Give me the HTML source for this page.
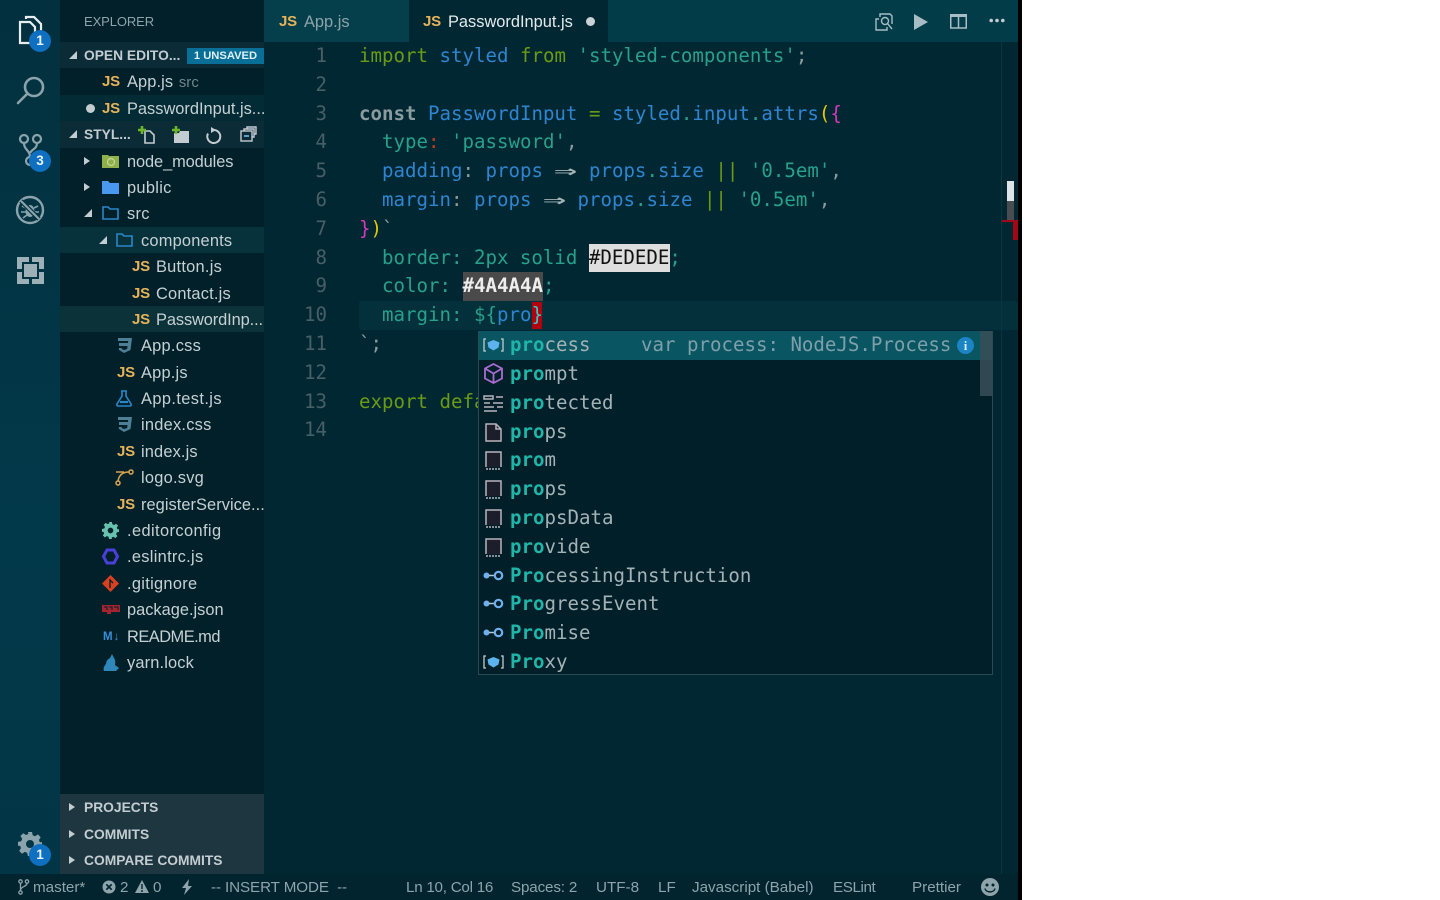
<!DOCTYPE html>
<html><head><meta charset="utf-8"><title>PasswordInput.js</title>
<style>
html,body{margin:0;padding:0;width:1440px;height:900px;overflow:hidden;background:#fff}
*{box-sizing:border-box}
.a{position:absolute}
#app{position:absolute;left:0;top:0;width:1018px;height:900px;background:#012631;overflow:hidden;font-family:"Liberation Sans",sans-serif}
#bar{position:absolute;left:1018px;top:0;width:4px;height:900px;background:#000}
#act{left:0;top:0;width:60px;height:874px;background:linear-gradient(#03303e,#02394a 60%,#023646)}
#side{left:60px;top:0;width:204px;height:874px;background:#01202a}
#tabs{left:264px;top:0;width:754px;height:42px;background:#033c49}
#ed{left:264px;top:42px;width:754px;height:832px;background:#012832}
#st{left:0;top:874px;width:1018px;height:26px;background:#01242e;color:#8fa3ab;font-size:15.2px;line-height:26px}
.st{position:absolute;top:1px;white-space:nowrap}
.hd{position:absolute;left:60px;width:204px;height:26.4px;background:#0b2b36}
.h{position:absolute;left:84px;font-size:13.8px;font-weight:bold;color:#c3cdd1;white-space:nowrap;line-height:26px;transform:translateY(1px)}
.r{position:absolute;font-size:16.4px;color:#c6d0d3;white-space:nowrap;line-height:26px;height:26px;transform:translateY(1px)}
.js{position:absolute;font-size:15px;font-weight:bold;color:#e6b35a;line-height:26px;height:26px;letter-spacing:-.2px;transform:translateY(1px)}
.tri{position:absolute;width:0;height:0}
.open{border-left:8px solid transparent;border-bottom:8px solid #c3cdd1}
.cl{border-left:6px solid #c3cdd1;border-top:4.5px solid transparent;border-bottom:4.5px solid transparent}
.badge{position:absolute;width:22px;height:22px;border-radius:50%;background:#0f6fc0;color:#e8f2fa;font-size:13.5px;font-weight:bold;text-align:center;line-height:22px}
.c{position:absolute;font-family:"DejaVu Sans Mono","Liberation Mono",monospace;font-size:19.1px;line-height:29px;height:29px;white-space:pre;color:#27a08c}
.n{position:absolute;left:290px;width:37px;text-align:right;font-family:"DejaVu Sans Mono",monospace;font-size:19.1px;line-height:29px;color:#475f66}
.g{color:#6b9a16}.b{color:#2f84cf}.t{color:#27a08c}.w{color:#8a9ca0}.y{color:#e0c80c}.m{color:#d33ab8}.o{color:#6b9a16}
.ar{display:inline-block;width:11.5px;margin-right:11.5px;transform:scaleX(2);transform-origin:left center;color:#a4b2b6;font-weight:bold}
.s{position:absolute;left:510px;font-family:"DejaVu Sans Mono",monospace;font-size:19.1px;line-height:29px;height:29px;white-space:pre;color:#a4b2b6;transform:translateY(-1px)}
.s b{color:#1fb5a8}
svg{position:absolute;overflow:visible}
</style></head><body>
<div id="app">
<div class="a" id="act"></div>
<div class="a" id="side"></div>
<div class="a" id="tabs"></div>
<div class="a" id="ed"></div>

<!-- activity icons -->
<svg style="left:18px;top:14px" width="26" height="32" viewBox="0 0 26 32" fill="none" stroke="#e8eef0" stroke-width="2.2"><path d="M3 8h9l5 5v16H2V8z"/><path d="M8 5V3h8l7 7v14"/></svg>
<div class="badge" style="left:29px;top:30px">1</div>
<svg style="left:16px;top:75px" width="30" height="30" viewBox="0 0 30 30" fill="none" stroke="#8ba3ac" stroke-width="2.6"><circle cx="18" cy="12" r="9"/><path d="M11.5 18.5L2 28" stroke-linecap="round"/></svg>
<svg style="left:18px;top:134px" width="26" height="32" viewBox="0 0 26 32" fill="none" stroke="#8ba3ac" stroke-width="2.2"><circle cx="6" cy="5" r="4"/><circle cx="19" cy="5" r="4"/><circle cx="12" cy="27" r="4"/><path d="M6 9c0 7 6 7 6 14M19 9c0 6-5 6-7 10"/></svg>
<div class="badge" style="left:29px;top:150px">3</div>
<svg style="left:15px;top:195px" width="30" height="30" viewBox="0 0 30 30" fill="none" stroke="#8ba3ac" stroke-width="2.4"><circle cx="15" cy="15" r="13"/><ellipse cx="15" cy="16" rx="4.500" ry="6" fill="#8ba3ac" stroke="none"/><path d="M7 11l4 2M23 11l-4 2M6 17h5M24 17h-5M8 23l4-3M22 23l-4-3" stroke-width="1.600"/><path d="M6 6l18 18" stroke="#02323f" stroke-width="4.500"/><path d="M6 6l18 18" stroke-width="2.200"/></svg>
<svg style="left:17px;top:257px" width="27" height="27" viewBox="0 0 27 27"><path d="M0 0h12v5H5v7H0zM15 0h12v12h-5V5h-7zM0 15h5v7h7v5H0zM27 15v12H15v-5h7v-7z" fill="#9db0b7"/><rect x="7" y="7" width="13" height="13" fill="#9db0b7"/></svg>
<svg style="left:18px;top:832px" width="24" height="24" viewBox="0 0 24 24"><path fill="#8ba3ac" fill-rule="evenodd" d="M10 0h4l.7 3.2 2.4 1 2.8-1.8 2.8 2.8-1.8 2.8 1 2.4L24 10v4l-3.1.7-1 2.4 1.8 2.8-2.8 2.8-2.8-1.8-2.4 1L13.9 24h-4l-.7-3.1-2.4-1-2.8 1.8-2.8-2.8 1.8-2.8-1-2.4L0 13.9v-4l3.2-.7 1-2.4L2.4 4 5.2 1.2 8 3l2.4-1zM12 8a4 4 0 100 8 4 4 0 000-8z"/></svg>
<div class="badge" style="left:29px;top:844px">1</div>

<!-- sidebar -->
<div class="a" style="left:84px;top:9px;font-size:13px;color:#8fa3aa;line-height:26px;letter-spacing:-.1px">EXPLORER</div>

<div class="hd" style="top:42px"></div>
<div class="tri open" style="left:69px;top:51px"></div>
<div class="h" style="top:42px">OPEN EDITO...</div>
<div class="a" style="left:187px;top:48px;width:77px;height:16px;background:#0a6f96;color:#dff0f6;font-size:11.2px;font-weight:bold;line-height:16px;text-align:center;white-space:nowrap">1 UNSAVED</div>

<div class="js" style="left:102px;top:68px">JS</div>
<div class="r" style="left:127px;top:68px;letter-spacing:.1px">App.js <span style="color:#6f868d;font-size:14.8px;margin-left:1px">src</span></div>
<div class="a" style="left:60px;top:95px;width:204px;height:26px;background:#022b35"></div>
<div class="a" style="left:86px;top:104px;width:9px;height:9px;border-radius:50%;background:#c3cdd1"></div>
<div class="js" style="left:102px;top:95px">JS</div>
<div class="r" style="left:127px;top:95px">PasswordInput.js...</div>

<div class="hd" style="top:121px;height:27px"></div>
<div class="tri open" style="left:69px;top:130px"></div>
<div class="h" style="top:121px">STYL...</div>
<svg style="left:138px;top:126px" width="20" height="18" viewBox="0 0 20 18" fill="none"><path d="M7 5h5l4 4v8H7z" stroke="#c3cdd1" stroke-width="1.600"/><path d="M4 0v8M0 4h8" stroke="#6fb52c" stroke-width="2.600"/></svg>
<svg style="left:171px;top:126px" width="20" height="18" viewBox="0 0 20 18"><path d="M3 7h5l1-2h9v12H3z" fill="#c3cdd1"/><path d="M5 0v8M1 4h8" stroke="#6fb52c" stroke-width="2.600"/></svg>
<svg style="left:205px;top:127px" width="16" height="17" viewBox="0 0 16 17" fill="none"><path d="M9 3a6.500 6.500 0 11-6 3.500" stroke="#c3cdd1" stroke-width="2"/><path d="M6 0l5 3-5 3z" fill="#c3cdd1"/></svg>
<svg style="left:240px;top:126px" width="17" height="16" viewBox="0 0 17 16" fill="none" stroke="#c3cdd1" stroke-width="1.400"><rect x="1" y="5" width="11" height="10" fill="#0b2b36"/><path d="M4 5V3h10v8h-2M7 3V1h9v7h-2"/><path d="M4 10h5" stroke-width="2" stroke="#5fa0c8"/></svg>

<div class="tri cl" style="left:84px;top:157px"></div>
<svg style="left:102px;top:153px" width="17" height="15" viewBox="0 0 17 15"><path d="M0 2h6l1 1h10v12H0z" fill="#8fb04a"/><circle cx="9" cy="9" r="3.500" fill="none" stroke="#c4d89a" stroke-width="1.200"/></svg>
<div class="r" style="left:127px;top:148px;letter-spacing:-.1px">node_modules</div>

<div class="tri cl" style="left:84px;top:183px"></div>
<svg style="left:102px;top:180px" width="17" height="14" viewBox="0 0 17 14"><path d="M0 1h6l2 2h9v11H0z" fill="#4a97f0"/></svg>
<div class="r" style="left:127px;top:174px;letter-spacing:.3px">public</div>

<div class="tri open" style="left:84px;top:209px"></div>
<svg style="left:102px;top:206px" width="17" height="14" viewBox="0 0 17 14"><path d="M1 1h5l2 2h8v10H1z" fill="none" stroke="#2b86c8" stroke-width="1.600"/></svg>
<div class="r" style="left:127px;top:200px;letter-spacing:.3px">src</div>

<div class="a" style="left:60px;top:227px;width:204px;height:26px;background:#07323c"></div>
<div class="tri open" style="left:99px;top:236px"></div>
<svg style="left:116px;top:233px" width="17" height="14" viewBox="0 0 17 14"><path d="M1 1h5l2 2h8v10H1z" fill="none" stroke="#2b86c8" stroke-width="1.600"/></svg>
<div class="r" style="left:141px;top:227px;letter-spacing:.2px">components</div>

<div class="js" style="left:132px;top:253px">JS</div><div class="r" style="left:156px;top:253px;letter-spacing:.25px">Button.js</div>
<div class="js" style="left:132px;top:280px">JS</div><div class="r" style="left:156px;top:280px;letter-spacing:.2px">Contact.js</div>
<div class="a" style="left:60px;top:306px;width:204px;height:26px;background:#0a3238"></div>
<div class="js" style="left:132px;top:306px">JS</div><div class="r" style="left:156px;top:306px;letter-spacing:-.1px">PasswordInp...</div>

<svg style="left:117px;top:338px" width="15" height="15" viewBox="0 0 15 15"><path d="M1 0h14l-1.500 12L7 15l-5-3-.3-2h3v1l2.500 1 3-1 .3-3H2V5h9l.2-2H1z" fill="#4f7f94"/></svg>
<div class="r" style="left:141px;top:332px;letter-spacing:.25px">App.css</div>
<div class="js" style="left:117px;top:359px">JS</div><div class="r" style="left:141px;top:359px;letter-spacing:.2px">App.js</div>
<svg style="left:116px;top:390px" width="16" height="17" viewBox="0 0 16 17" fill="none" stroke="#2b86c8" stroke-width="1.600"><path d="M5 1h6M6 1v5L1 14c-.5 1 0 2 1 2h12c1 0 1.500-1 1-2L10 6V1"/><path d="M4 12h8" stroke-width="2.200"/></svg>
<div class="r" style="left:141px;top:385px;letter-spacing:.4px">App.test.js</div>
<svg style="left:117px;top:417px" width="15" height="15" viewBox="0 0 15 15"><path d="M1 0h14l-1.500 12L7 15l-5-3-.3-2h3v1l2.500 1 3-1 .3-3H2V5h9l.2-2H1z" fill="#4f7f94"/></svg>
<div class="r" style="left:141px;top:411px;letter-spacing:.25px">index.css</div>
<div class="js" style="left:117px;top:438px">JS</div><div class="r" style="left:141px;top:438px;letter-spacing:.15px">index.js</div>
<svg style="left:115px;top:469px" width="19" height="17" viewBox="0 0 19 17" fill="none" stroke="#d9a44e" stroke-width="1.500"><circle cx="16" cy="3" r="2"/><circle cx="3" cy="14" r="2"/><path d="M3 12C4 6 8 3 14 3M1 3h8"/></svg>
<div class="r" style="left:141px;top:464px;letter-spacing:.25px">logo.svg</div>
<div class="js" style="left:117px;top:491px">JS</div><div class="r" style="left:141px;top:491px;letter-spacing:.05px">registerService...</div>

<svg style="left:102px;top:522px" width="17" height="17" viewBox="0 0 24 24"><path fill="#66c2ae" fill-rule="evenodd" d="M10 0h4l.7 3.200 2.400 1 2.800-1.800 2.800 2.800-1.800 2.800 1 2.400L24 10v4l-3.100.7-1 2.400 1.800 2.800-2.800 2.800-2.800-1.800-2.400 1L13.900 24h-4l-.7-3.100-2.400-1-2.800 1.800-2.800-2.800 1.800-2.800-1-2.400L0 13.900v-4l3.200-.7 1-2.400L2.400 4 5.200 1.200 8 3l2.400-1zM12 8a4 4 0 100 8 4 4 0 000-8z"/></svg>
<div class="r" style="left:127px;top:517px;letter-spacing:.4px">.editorconfig</div>
<svg style="left:102px;top:548px" width="17" height="17" viewBox="0 0 17 17" fill="none"><path d="M5 2h7l3.500 6.500L12 15H5L1.500 8.500z" stroke="#4b3fd8" stroke-width="3"/></svg>
<div class="r" style="left:127px;top:543px;letter-spacing:.3px">.eslintrc.js</div>
<svg style="left:102px;top:575px" width="17" height="17" viewBox="0 0 17 17"><path d="M8.500 0L17 8.500 8.500 17 0 8.500z" fill="#d8401f"/><path d="M8 4v9M8 5l3 3" stroke="#01202a" stroke-width="1.300"/></svg>
<div class="r" style="left:127px;top:570px;letter-spacing:.3px">.gitignore</div>
<svg style="left:102px;top:605px" width="18" height="9" viewBox="0 0 18 9"><path d="M0 0h18v7h-9v2H5V7H0z" fill="#a3232e"/><path d="M2 2h3v3M7 2h3v3M12 2h4v3" stroke="#01202a" fill="none"/></svg>
<div class="r" style="left:127px;top:596px">package.json</div>
<div class="a" style="left:103px;top:623px;font-size:11.5px;font-weight:bold;color:#3a8fd8;line-height:28px;letter-spacing:1px">M↓</div>
<div class="r" style="left:127px;top:623px;letter-spacing:-.5px">README.md</div>
<svg style="left:103px;top:654px" width="16" height="17" viewBox="0 0 16 17"><path d="M9 0l2 4c2 3 1 6 1 7l4 3-3 3H1c-1-2 0-5 2-7 0-3 2-5 4-6z" fill="#2f86b8"/></svg>
<div class="r" style="left:127px;top:649px;letter-spacing:.15px">yarn.lock</div>

<div class="a" style="left:60px;top:794px;width:204px;height:80px;background:#1e3640"></div>
<div class="tri cl" style="left:69px;top:803px"></div><div class="h" style="top:794px">PROJECTS</div>
<div class="tri cl" style="left:69px;top:830px"></div><div class="h" style="top:821px">COMMITS</div>
<div class="tri cl" style="left:69px;top:856px"></div><div class="h" style="top:847px">COMPARE COMMITS</div>

<!-- tabs -->
<div class="a" style="left:264px;top:0;width:145px;height:42px;background:#053f4c"></div>
<div class="a" style="left:409px;top:0;width:199px;height:42px;background:#012832"></div>
<div class="js" style="left:279px;top:8px">JS</div>
<div class="r" style="left:304px;top:8px;color:#8ea3aa">App.js</div>
<div class="js" style="left:423px;top:8px">JS</div>
<div class="r" style="left:448px;top:8px;color:#e4eaec">PasswordInput.js</div>
<div class="a" style="left:586px;top:17px;width:9px;height:9px;border-radius:50%;background:#c9d2d5"></div>

<svg style="left:875px;top:13px" width="18" height="18" viewBox="0 0 18 18" fill="none" stroke="#a7bcc4" stroke-width="1.400"><path d="M4 6H1v11h11v-3M5 4V1h10l2 2v8"/><circle cx="10" cy="8" r="3.500"/><path d="M12.500 10.500L17 16"/></svg>
<svg style="left:914px;top:14px" width="14" height="16" viewBox="0 0 14 16"><path d="M0 0l14 8-14 8z" fill="#a7bcc4"/></svg>
<svg style="left:950px;top:14px" width="17" height="15" viewBox="0 0 17 15" fill="none" stroke="#a7bcc4" stroke-width="1.500"><rect x=".75" y="1.500" width="15.500" height="12.500"/><path d="M8.500 1v13"/><path d="M0 1.500h17" stroke-width="3"/></svg>
<svg style="left:989px;top:18px" width="16" height="5" viewBox="0 0 16 5" fill="#c3cdd1"><circle cx="2.200" cy="2.500" r="1.800"/><circle cx="8" cy="2.500" r="1.800"/><circle cx="13.800" cy="2.500" r="1.800"/></svg>

<!-- editor -->
<div class="a" style="left:359px;top:301px;width:659px;height:29px;background:#03303a;border-radius:3px"></div>
<div class="a" style="left:589px;top:244px;width:81px;height:28px;background:#dedede"></div>
<div class="a" style="left:463px;top:272px;width:80px;height:29px;background:#4a4a4a"></div>
<div class="a" style="left:532px;top:302px;width:10px;height:27px;background:#b3000f"></div>

<div class="n" style="top:41px">1</div><div class="n" style="top:70px">2</div><div class="n" style="top:99px">3</div><div class="n" style="top:127px">4</div><div class="n" style="top:156px">5</div><div class="n" style="top:185px">6</div><div class="n" style="top:214px">7</div><div class="n" style="top:243px">8</div><div class="n" style="top:271px">9</div><div class="n" style="top:300px">10</div><div class="n" style="top:329px">11</div><div class="n" style="top:358px">12</div><div class="n" style="top:387px">13</div><div class="n" style="top:415px">14</div>

<div class="c" style="left:359px;top:41px"><span class="g">import</span> <span class="b">styled</span> <span class="g">from</span> <span class="t">'styled-components'</span><span class="w">;</span></div>
<div class="c" style="left:359px;top:99px"><b class="w">const</b> <span class="b">PasswordInput</span> <span class="g">=</span> <span class="b">styled</span><span class="t">.</span><span class="b">input</span><span class="t">.</span><span class="b">attrs</span><span class="y">(</span><span class="m">{</span></div>
<div class="c" style="left:359px;top:127px">  <span class="t">type</span><span style="color:#b8401f">:</span> <span class="t">'password'</span><span class="w">,</span></div>
<div class="c" style="left:359px;top:156px">  <span class="b">padding</span><span class="w">:</span> <span class="b">props</span> <span class="ar">⇒</span> <span class="b">props</span><span class="t">.</span><span class="b">size</span> <span class="g">||</span> <span class="t">'0.5em'</span><span class="w">,</span></div>
<div class="c" style="left:359px;top:185px">  <span class="b">margin</span><span class="w">:</span> <span class="b">props</span> <span class="ar">⇒</span> <span class="b">props</span><span class="t">.</span><span class="b">size</span> <span class="g">||</span> <span class="t">'0.5em'</span><span class="w">,</span></div>
<div class="c" style="left:359px;top:214px"><span class="m">}</span><span class="y">)</span><span class="w">`</span></div>
<div class="c" style="left:359px;top:243px">  border: 2px solid <span style="color:#111">#DEDEDE</span><span class="t">;</span></div>
<div class="c" style="left:359px;top:271px">  color: <span style="color:#eee;font-weight:bold">#4A4A4A</span><span class="t">;</span></div>
<div class="c" style="left:359px;top:300px">  margin: ${<span class="b">pro</span><span style="color:#3cc">}</span></div>
<div class="c" style="left:359px;top:329px"><span class="w">`;</span></div>
<div class="c" style="left:359px;top:387px"><span class="o">export defa</span></div>

<div class="a" style="left:1001px;top:42px;width:1px;height:832px;background:#0b3640"></div>
<div class="a" style="left:1007px;top:181px;width:7px;height:20px;background:#dfe5e7"></div>
<div class="a" style="left:1007px;top:201px;width:7px;height:20px;background:#4a4d50"></div>
<div class="a" style="left:1002px;top:220px;width:16px;height:2px;background:#a00818"></div>
<div class="a" style="left:1013px;top:221px;width:5px;height:19px;background:#a00818"></div>

<!-- suggest widget -->
<div class="a" style="left:478px;top:331px;width:515px;height:344px;background:#011f29;border:1px solid #2b4a52"></div>
<div class="a" style="left:479px;top:331px;width:513px;height:29px;background:#0a5562"></div>
<div class="a" style="left:980px;top:331px;width:12px;height:65px;background:#3a4f58;opacity:.85"></div>

<svg style="left:483px;top:338px" width="21" height="14" viewBox="0 0 21 14"><path d="M3 1H1v12h2M18 1h2v12h-2" fill="none" stroke="#c3cdd1" stroke-width="1.300"/><path d="M10.500 2l6 2.500-1 5-5 3-5-3-1-5z" fill="#5db4ec"/></svg>
<svg style="left:484px;top:363px" width="19" height="21" viewBox="0 0 19 21" fill="none" stroke="#a96bd0" stroke-width="1.800"><path d="M9.500 1L18 5.500v10L9.500 20 1 15.500v-10z"/><path d="M1 5.500l8.500 5 8.500-5M9.500 10.500V20"/></svg>
<svg style="left:483px;top:395px" width="21" height="17" viewBox="0 0 21 17" stroke="#b9b4bc" stroke-width="1.500" fill="none"><rect x="1" y="1" width="9" height="3"/><path d="M13 2h7M1 8h6M10 8h10M1 12h10M14 12h6M1 16h13"/></svg>
<svg style="left:485px;top:423px" width="17" height="19" viewBox="0 0 17 19" fill="#1c1f2b" stroke="#b9b4bc" stroke-width="1.500"><path d="M1 1h10l5 5v12H1z"/><path d="M11 1v5h5" fill="none"/></svg>
<svg style="left:485px;top:451px" width="17" height="19" viewBox="0 0 17 19" fill="#1c1f2b" stroke="#b9b4bc" stroke-width="1.500"><path d="M1 16V1h15v15"/><path d="M1 18h15" stroke-dasharray="2 1" fill="none"/></svg>
<svg style="left:485px;top:480px" width="17" height="19" viewBox="0 0 17 19" fill="#1c1f2b" stroke="#b9b4bc" stroke-width="1.500"><path d="M1 16V1h15v15"/><path d="M1 18h15" stroke-dasharray="2 1" fill="none"/></svg>
<svg style="left:485px;top:509px" width="17" height="19" viewBox="0 0 17 19" fill="#1c1f2b" stroke="#b9b4bc" stroke-width="1.500"><path d="M1 16V1h15v15"/><path d="M1 18h15" stroke-dasharray="2 1" fill="none"/></svg>
<svg style="left:485px;top:538px" width="17" height="19" viewBox="0 0 17 19" fill="#1c1f2b" stroke="#b9b4bc" stroke-width="1.500"><path d="M1 16V1h15v15"/><path d="M1 18h15" stroke-dasharray="2 1" fill="none"/></svg>
<svg style="left:483px;top:570px" width="21" height="11" viewBox="0 0 21 11"><circle cx="3.500" cy="5.500" r="3" fill="#6fb0ee"/><path d="M6 5.500h6" stroke="#b9c6cc" stroke-width="1.500"/><circle cx="15.500" cy="5.500" r="3.700" fill="none" stroke="#6fb0ee" stroke-width="2.200"/></svg>
<svg style="left:483px;top:598px" width="21" height="11" viewBox="0 0 21 11"><circle cx="3.500" cy="5.500" r="3" fill="#6fb0ee"/><path d="M6 5.500h6" stroke="#b9c6cc" stroke-width="1.500"/><circle cx="15.500" cy="5.500" r="3.700" fill="none" stroke="#6fb0ee" stroke-width="2.200"/></svg>
<svg style="left:483px;top:627px" width="21" height="11" viewBox="0 0 21 11"><circle cx="3.500" cy="5.500" r="3" fill="#6fb0ee"/><path d="M6 5.500h6" stroke="#b9c6cc" stroke-width="1.500"/><circle cx="15.500" cy="5.500" r="3.700" fill="none" stroke="#6fb0ee" stroke-width="2.200"/></svg>
<svg style="left:483px;top:655px" width="21" height="14" viewBox="0 0 21 14"><path d="M3 1H1v12h2M18 1h2v12h-2" fill="none" stroke="#c3cdd1" stroke-width="1.300"/><path d="M10.500 2l6 2.500-1 5-5 3-5-3-1-5z" fill="#5db4ec"/></svg>

<div class="s" style="top:331px"><b>pro</b>cess</div>
<div class="s" style="left:641px;top:331px;color:#7da0aa">var process: NodeJS.Process</div>
<div class="a" style="left:957px;top:337px;width:17px;height:17px;border-radius:50%;background:#1b84c4;color:#d8eef8;font:bold 13px/17px 'Liberation Serif',serif;text-align:center">i</div>
<div class="s" style="top:360px"><b>pro</b>mpt</div>
<div class="s" style="top:389px"><b>pro</b>tected</div>
<div class="s" style="top:418px"><b>pro</b>ps</div>
<div class="s" style="top:446px"><b>pro</b>m</div>
<div class="s" style="top:475px"><b>pro</b>ps</div>
<div class="s" style="top:504px"><b>pro</b>psData</div>
<div class="s" style="top:533px"><b>pro</b>vide</div>
<div class="s" style="top:562px"><b>Pro</b>cessingInstruction</div>
<div class="s" style="top:590px"><b>Pro</b>gressEvent</div>
<div class="s" style="top:619px"><b>Pro</b>mise</div>
<div class="s" style="top:648px"><b>Pro</b>xy</div>

<!-- status -->
<div class="a" id="st">
<svg style="left:18px;top:5px" width="11" height="16" viewBox="0 0 11 16" fill="none" stroke="#8fa3ab" stroke-width="1.300"><circle cx="2.500" cy="2.500" r="1.700"/><circle cx="9" cy="2.500" r="1.700"/><circle cx="2.500" cy="13.500" r="1.700"/><path d="M2.500 4v8M9 4c0 4-6 3-6.500 7"/></svg>
<span class="st" style="left:33px">master*</span>
<svg style="left:102px;top:6px" width="14" height="14" viewBox="0 0 14 14"><circle cx="7" cy="7" r="6.500" fill="#8fa3ab"/><path d="M4.300 4.300l5.400 5.400M9.700 4.300L4.300 9.700" stroke="#01242e" stroke-width="1.700"/></svg>
<span class="st" style="left:120px">2</span>
<svg style="left:135px;top:6px" width="14" height="13" viewBox="0 0 14 13"><path d="M7 0l7 13H0z" fill="#8fa3ab"/><path d="M7 4v5M7 10v2" stroke="#01242e" stroke-width="1.400"/></svg>
<span class="st" style="left:153px">0</span>
<svg style="left:181px;top:5px" width="12" height="16" viewBox="0 0 12 16"><path d="M8 0L1 9h4l-2 7 8-9H7z" fill="#8fa3ab"/></svg>
<span class="st" style="left:211px;letter-spacing:-.1px">-- INSERT MODE&nbsp; --</span>
<span class="st" style="left:406px;letter-spacing:-.25px">Ln 10, Col 16</span>
<span class="st" style="left:511px;letter-spacing:-.15px">Spaces: 2</span>
<span class="st" style="left:596px">UTF-8</span>
<span class="st" style="left:658px">LF</span>
<span class="st" style="left:692px">Javascript (Babel)</span>
<span class="st" style="left:833px;letter-spacing:-.4px">ESLint</span>
<span class="st" style="left:912px">Prettier</span>
<svg style="left:981px;top:4px" width="18" height="18" viewBox="0 0 18 18"><circle cx="9" cy="9" r="9" fill="#8fa3ab"/><circle cx="6" cy="7" r="1.500" fill="#01242e"/><circle cx="12" cy="7" r="1.500" fill="#01242e"/><path d="M4 10.500c1 4.500 9 4.500 10 0" fill="none" stroke="#01242e" stroke-width="1.400"/></svg>
</div>
</div>
<div id="bar"></div>
</body></html>
